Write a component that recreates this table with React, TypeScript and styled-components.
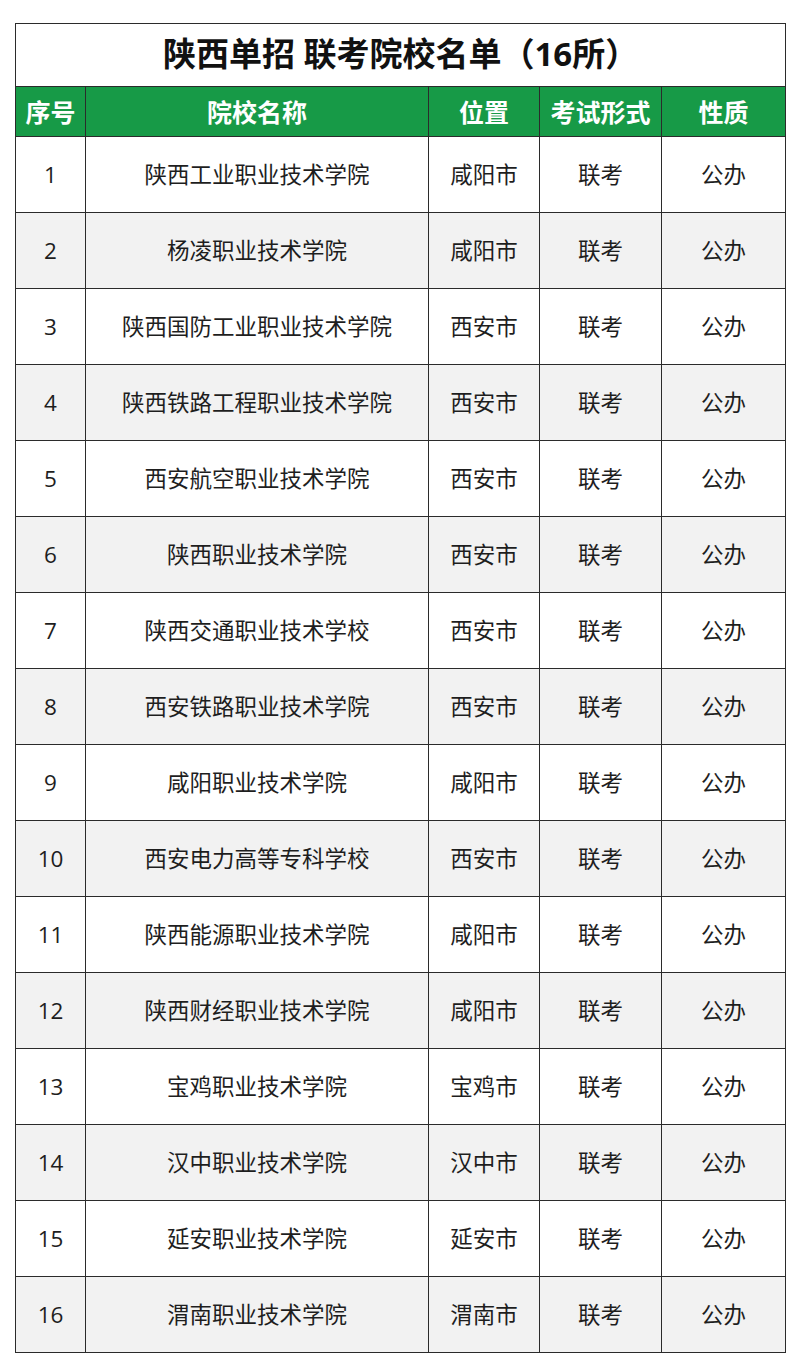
import React from 'react';
import styled, { createGlobalStyle } from 'styled-components';

const GlobalStyle = createGlobalStyle`
  body {
    margin: 0;
    background: #ffffff;
    font-family: "Open Sans", "Noto Sans CJK SC", sans-serif;
  }
`;

const colors = {
  green: '#179a47',
  line: '#2b2b2b',
  stripe: '#f2f2f2',
  text: '#1e1e1e',
};

type School = {
  name: string;
  city: string;
};

const schools: School[] = [
  { name: '陕西工业职业技术学院', city: '咸阳市' },
  { name: '杨凌职业技术学院', city: '咸阳市' },
  { name: '陕西国防工业职业技术学院', city: '西安市' },
  { name: '陕西铁路工程职业技术学院', city: '西安市' },
  { name: '西安航空职业技术学院', city: '西安市' },
  { name: '陕西职业技术学院', city: '西安市' },
  { name: '陕西交通职业技术学校', city: '西安市' },
  { name: '西安铁路职业技术学院', city: '西安市' },
  { name: '咸阳职业技术学院', city: '咸阳市' },
  { name: '西安电力高等专科学校', city: '西安市' },
  { name: '陕西能源职业技术学院', city: '咸阳市' },
  { name: '陕西财经职业技术学院', city: '咸阳市' },
  { name: '宝鸡职业技术学院', city: '宝鸡市' },
  { name: '汉中职业技术学院', city: '汉中市' },
  { name: '延安职业技术学院', city: '延安市' },
  { name: '渭南职业技术学院', city: '渭南市' },
];

const columns = [
  { label: '序号', width: 70 },
  { label: '院校名称', width: 343 },
  { label: '位置', width: 111 },
  { label: '考试形式', width: 122 },
  { label: '性质', width: 124 },
];

const Page = styled.div`
  padding: 23px 15px 15px;
`;

const Table = styled.table`
  width: 770px;
  border-collapse: collapse;
  table-layout: fixed;
  border: 1.5px solid ${colors.line};
`;

const TitleCell = styled.th`
  height: 60px;
  padding: 0 0 2px;
  font-size: 33px;
  line-height: 40px;
  font-weight: 700;
  color: #111;
  text-align: center;
  border: 1.5px solid ${colors.line};
`;

const HeadCell = styled.th`
  height: 49px;
  padding: 0;
  background: ${colors.green};
  color: #ffffff;
  font-size: 25px;
  line-height: 30px;
  font-weight: 700;
  text-align: center;
  border: 1.5px solid ${colors.line};
`;

const Row = styled.tr<{ $striped: boolean }>`
  height: 76px;
  background: ${(p) => (p.$striped ? colors.stripe : '#ffffff')};
`;

const Cell = styled.td`
  padding: 0;
  font-size: 22.5px;
  line-height: 30px;
  color: ${colors.text};
  text-align: center;
  border: 1.5px solid ${colors.line};
`;

export default function App() {
  return (
    <Page>
      <GlobalStyle />
      <Table>
        <colgroup>
          {columns.map((c) => (
            <col key={c.label} style={{ width: c.width }} />
          ))}
        </colgroup>
        <thead>
          <tr>
            <TitleCell colSpan={5}>陕西单招 联考院校名单（16所）</TitleCell>
          </tr>
          <tr>
            {columns.map((c) => (
              <HeadCell key={c.label}>{c.label}</HeadCell>
            ))}
          </tr>
        </thead>
        <tbody>
          {schools.map((s, i) => (
            <Row key={s.name} $striped={i % 2 === 1}>
              <Cell>{i + 1}</Cell>
              <Cell>{s.name}</Cell>
              <Cell>{s.city}</Cell>
              <Cell>联考</Cell>
              <Cell>公办</Cell>
            </Row>
          ))}
        </tbody>
      </Table>
    </Page>
  );
}
